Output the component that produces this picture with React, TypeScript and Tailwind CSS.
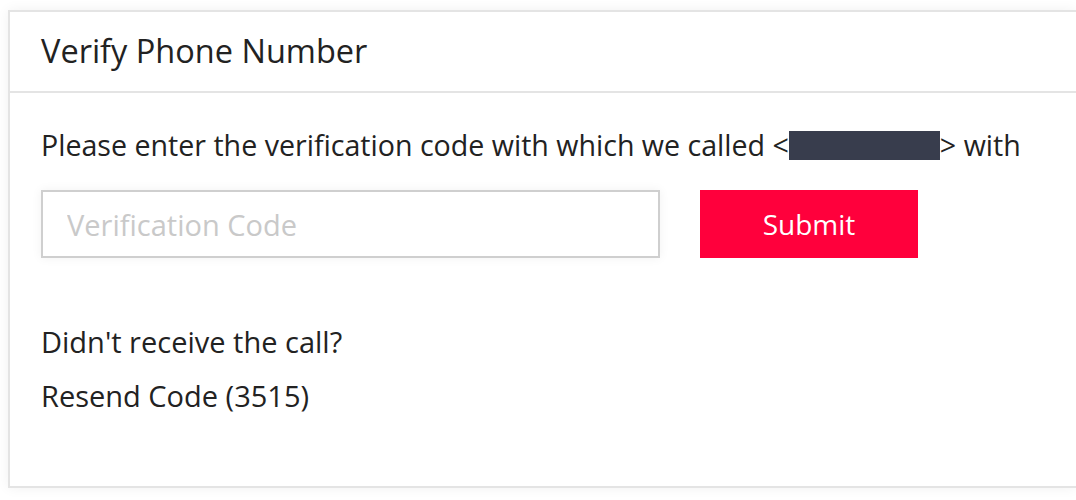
import React from "react";

export default function App() {
  return (
    <div className="w-[1076px] h-[500px] overflow-hidden bg-white" style={{ fontFamily: "'Open Sans', Lato, sans-serif" }}>
      <div className="ml-[8px] mt-[10px] w-[1068px] h-[478px] bg-white border-l-2 border-t-2 border-b-2 border-[#e4e4e4] shadow-[0_0_12px_rgba(0,0,0,0.06)] flex flex-col">
        <div className="h-[81px] border-b-2 border-[#e4e4e4] flex items-center pl-[31px]">
          <h1 className="text-[32.5px] text-[#222] leading-none">Verify Phone Number</h1>
        </div>
        <div className="pl-[31px] pt-[38px]">
          <p className="text-[28.6px] text-[#222] leading-none flex items-center">
            <span>Please enter the verification code with which we called &lt;</span>
            <span className="inline-block w-[151px] h-[29px] bg-[#383d4d]" />
            <span>&gt; with</span>
          </p>
          <div className="flex items-center mt-[30px] gap-[40px]">
            <input
              className="w-[619px] h-[68px] border-2 border-[#cfcfcf] bg-white pl-[24px] text-[29px] placeholder:text-[#c9c9c9] outline-none shadow-[0_0_10px_rgba(0,0,0,0.06)]"
              placeholder="Verification Code"
            />
            <button className="w-[218px] h-[68px] bg-[#ff003c] text-white text-[28px]">Submit</button>
          </div>
          <p className="mt-[69px] text-[29px] text-[#222] leading-none">Didn't receive the call?</p>
          <p className="mt-[25px] text-[29px] text-[#222] leading-none">Resend Code (3515)</p>
        </div>
      </div>
    </div>
  );
}
